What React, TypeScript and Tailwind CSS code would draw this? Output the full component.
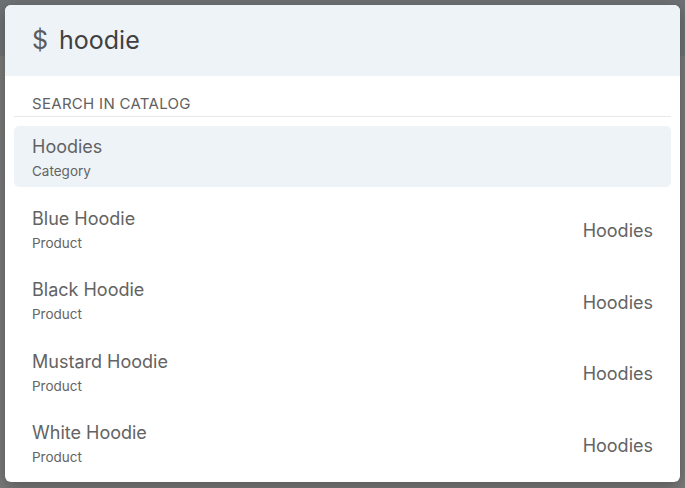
import React from "react";

const ITEMS = [
  { title: "Hoodies", kind: "Category", right: "", active: true },
  { title: "Blue Hoodie", kind: "Product", right: "Hoodies" },
  { title: "Black Hoodie", kind: "Product", right: "Hoodies" },
  { title: "Mustard Hoodie", kind: "Product", right: "Hoodies" },
  { title: "White Hoodie", kind: "Product", right: "Hoodies" },
];

export default function App() {
  return (
    <div
      className="relative h-[488px] w-[685px] overflow-hidden bg-[#7a7a7a]"
      style={{ fontFamily: "Inter, 'Noto Sans', sans-serif" }}
    >
      {/* page behind the overlay */}
      <div className="pointer-events-none absolute inset-x-0 top-0 h-[56px] bg-[#6f7275]" />

      {/* modal */}
      <div className="absolute left-[5px] top-[5px] flex h-[477px] w-[675px] flex-col overflow-hidden rounded-md bg-white shadow-[0_4px_16px_rgba(0,0,0,0.3)]">
        {/* search input */}
        <div className="flex h-[71px] flex-none items-center bg-[#eef3f8] px-[27px] text-[25px] text-[#404040]">
          <span className="text-[#5c5c5c]">$</span>
          <span className="ml-[11px]">hoodie</span>
        </div>

        <div className="px-[9px] pt-[18px]">
          <div className="border-b border-[#e6e8ea] px-[18px] pb-[2px] text-[15px] leading-5 tracking-[0.3px] uppercase text-[#616161]">
            Search in catalog
          </div>

          <ul className="mt-[9px] flex flex-col gap-[10.5px]">
            {ITEMS.map((it) => (
              <li
                key={it.title}
                className={
                  "flex items-center justify-between rounded-[5px] px-[18px] pt-[9px] pb-[4px] " +
                  (it.active ? "bg-[#eef3f8]" : "")
                }
              >
                <div className="flex flex-col">
                  <span className="text-[18px] leading-6 text-[#636363]">{it.title}</span>
                  <span className="text-[13.5px] leading-6 text-[#646464]">{it.kind}</span>
                </div>
                {it.right && (
                  <span className="text-[18px] text-[#636363]">{it.right}</span>
                )}
              </li>
            ))}
          </ul>
        </div>
      </div>
    </div>
  );
}
